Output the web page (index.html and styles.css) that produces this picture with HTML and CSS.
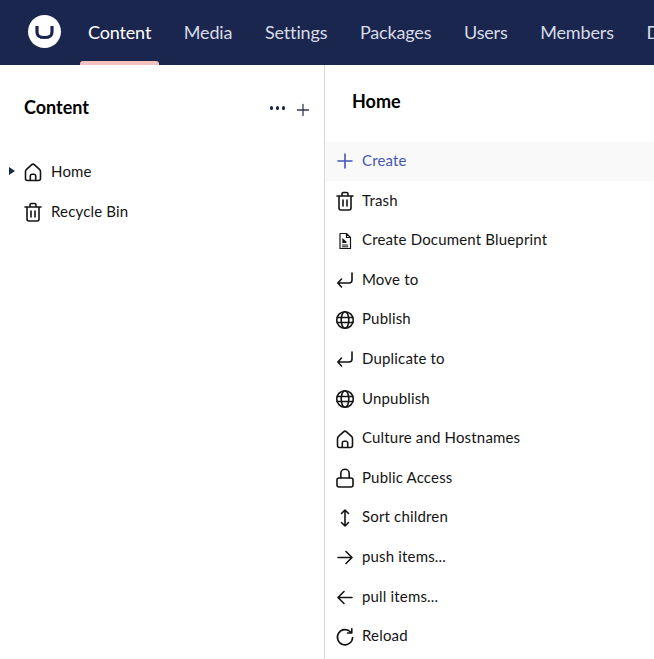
FILE: index.html
```html
<!DOCTYPE html>
<html lang="en">
<head>
    <meta charset="UTF-8">
    <meta name="viewport" content="width=device-width, initial-scale=1.0">
    <title>Content</title>
    <link rel="stylesheet" href="styles.css">
</head>
<body>
    <svg class="icon-defs" width="0" height="0">
        <symbol id="i-home" viewBox="0 0 20 20"><path d="M2.500 16.500V9.500c0-.8.300-1.500 1-2.100l5-4.600a2.200 2.200 0 0 1 3 0l5 4.600c.7.600 1 1.300 1 2.100v7a2 2 0 0 1-2 2h-11a2 2 0 0 1-2-2z M7.300 18.500v-4.500a1.700 1.700 0 0 1 1.700-1.700h2a1.700 1.700 0 0 1 1.700 1.700v4.500"/></symbol>
        <symbol id="i-trash" viewBox="0 0 20 20"><path d="M2 5h16 M7 5V3a1.500 1.500 0 0 1 1.500-1.500h3A1.500 1.500 0 0 1 13 3v2 M4 5v12a2 2 0 0 0 2 2h8a2 2 0 0 0 2-2V5 M8 9v6 M12 9v6"/></symbol>
        <symbol id="i-doc" viewBox="0 0 20 20"><path d="M5 2.500h6.500L15.500 6.500v11H5z M11.500 2.500V6.500h4" stroke-width="1.200"/><path class="solid" d="M7.300 7l4.200 3.800v1.200H7.300z"/><path d="M7.300 14h5.500 M7.300 15.800h5.500" stroke-width="1"/></symbol>
        <symbol id="i-return" viewBox="0 0 20 20"><path d="M17 3v7a3 3 0 0 1-3 3H3 M6.500 9L2.800 13l3.700 4"/></symbol>
        <symbol id="i-globe" viewBox="0 0 20 20"><circle cx="10" cy="10" r="8.300"/><ellipse cx="10" cy="10" rx="3.800" ry="8.300"/><path d="M2 7.500h16 M2 12.500h16"/></symbol>
        <symbol id="i-lock" viewBox="0 0 20 20"><rect x="2" y="10" width="16" height="9" rx="2"/><path d="M5.800 10V5.500a4.200 4.200 0 0 1 8.400 0V10"/></symbol>
        <symbol id="i-sort" viewBox="0 0 20 20"><path d="M10 2v16 M6.500 5.500L10 2l3.500 3.500 M6.500 14.500L10 18l3.500-3.500"/></symbol>
        <symbol id="i-right" viewBox="0 0 20 20"><path d="M3 10.500h14 M11 4.500l6 6-6 6"/></symbol>
        <symbol id="i-left" viewBox="0 0 20 20"><path d="M17 10.500H3 M9 4.500l-6 6 6 6"/></symbol>
        <symbol id="i-reload" viewBox="0 0 20 20"><path d="M15.800 5.300A7.600 7.600 0 1 0 17.600 10.500 M16.800 1.800v4.200h-4.300"/></symbol>
        <symbol id="i-plus" viewBox="0 0 20 20"><path d="M10 3v14 M3 10h14"/></symbol>
    </svg>

    <header class="topbar">
        <div class="logo"><svg viewBox="0 0 33 33" width="33" height="33"><circle cx="16.500" cy="16.500" r="16.500" fill="#fff"/><path d="M9 11v6c0 4 2 5.500 7.500 5.500s7.500-1.500 7.500-5.500v-6" fill="none" stroke="#1b264f" stroke-width="3.200"/></svg></div>
        <nav class="mainnav">
            <a class="navlink active" href="#"><span class="navtext">Content</span></a>
            <a class="navlink" href="#"><span class="navtext">Media</span></a>
            <a class="navlink" href="#"><span class="navtext">Settings</span></a>
            <a class="navlink" href="#"><span class="navtext">Packages</span></a>
            <a class="navlink" href="#"><span class="navtext">Users</span></a>
            <a class="navlink" href="#"><span class="navtext">Members</span></a>
            <a class="navlink" href="#"><span class="navtext">Dictionary</span></a>
        </nav>
    </header>

    <div class="workspace">
        <aside class="tree">
            <div class="tree-head">
                <h2>Content</h2>
                <div class="tree-actions">
                    <span class="dots"><i></i><i></i><i></i></span>
                    <svg class="icon tree-plus"><use href="#i-plus"/></svg>
                </div>
            </div>
            <ul class="tree-list">
                <li class="tree-item"><span class="caret"></span><svg class="icon"><use href="#i-home"/></svg><span class="label">Home</span></li>
                <li class="tree-item"><span class="caret-gap"></span><svg class="icon"><use href="#i-trash"/></svg><span class="label">Recycle Bin</span></li>
            </ul>
        </aside>

        <section class="actions">
            <h3>Home</h3>
            <ul class="action-list">
                <li class="action hover"><svg class="icon"><use href="#i-plus"/></svg><span class="label">Create</span></li>
                <li class="action"><svg class="icon"><use href="#i-trash"/></svg><span class="label">Trash</span></li>
                <li class="action"><svg class="icon"><use href="#i-doc"/></svg><span class="label">Create Document Blueprint</span></li>
                <li class="action"><svg class="icon"><use href="#i-return"/></svg><span class="label">Move to</span></li>
                <li class="action"><svg class="icon"><use href="#i-globe"/></svg><span class="label">Publish</span></li>
                <li class="action"><svg class="icon"><use href="#i-return"/></svg><span class="label">Duplicate to</span></li>
                <li class="action"><svg class="icon"><use href="#i-globe"/></svg><span class="label">Unpublish</span></li>
                <li class="action"><svg class="icon"><use href="#i-home"/></svg><span class="label">Culture and Hostnames</span></li>
                <li class="action"><svg class="icon"><use href="#i-lock"/></svg><span class="label">Public Access</span></li>
                <li class="action"><svg class="icon"><use href="#i-sort"/></svg><span class="label">Sort children</span></li>
                <li class="action"><svg class="icon"><use href="#i-right"/></svg><span class="label">push items...</span></li>
                <li class="action"><svg class="icon"><use href="#i-left"/></svg><span class="label">pull items...</span></li>
                <li class="action"><svg class="icon"><use href="#i-reload"/></svg><span class="label">Reload</span></li>
            </ul>
        </section>
    </div>
</body>
</html>
```

FILE: styles.css
```css
html, body {
    height: 100%;
}

body {
    margin: 0;
    display: flex;
    flex-direction: column;
    overflow: hidden;
    background-color: white;
    color: #141414;
    font-family: Lato, "Noto Sans", sans-serif;
    font-size: 15px;
}

ul {
    list-style-type: none;
    margin: 0;
    padding: 0;
}

.icon-defs {
    position: absolute;
}

symbol {
    fill: none;
    stroke: currentColor;
    stroke-width: 1.6;
    stroke-linecap: round;
    stroke-linejoin: round;
}

.solid {
    fill: currentColor;
    stroke: none;
}

.icon {
    width: 20px;
    height: 20px;
    flex: none;
}

.label {
    padding-bottom: 3px;
    letter-spacing: 0.17px;
}

/* top bar */
.topbar {
    height: 65px;
    flex: none;
    display: flex;
    background-color: #1b264f;
    overflow: hidden;
}

.logo {
    display: flex;
    align-items: center;
    padding-bottom: 2px;
    margin-left: 28px;
    margin-right: 10.700px;
}

.mainnav {
    display: flex;
    white-space: nowrap;
}

.navlink {
    position: relative;
    display: flex;
    align-items: center;
    padding: 0 16.300px;
    color: #d7dbe6;
    font-size: 18px;
    letter-spacing: -0.15px;
    text-decoration: none;
}

.navtext {
    padding-bottom: 2px;
}

.navlink.active {
    color: white;
}

.navlink.active::after {
    content: "";
    position: absolute;
    left: 8.300px;
    right: 8.300px;
    bottom: 0;
    height: 4px;
    border-radius: 3px 3px 0 0;
    background-color: #f5c1bc;
}

/* left tree */
.workspace {
    flex: 1;
    display: flex;
    min-height: 0;
}

.tree {
    width: 324px;
    flex: none;
    border-right: 1px solid #d8d7d9;
}

.tree-head {
    box-sizing: border-box;
    height: 87px;
    display: flex;
    align-items: center;
    justify-content: space-between;
    padding: 0 13px 3px 24px;
}

.tree-head h2 {
    margin: 0;
    color: #000;
    font-size: 18px;
    font-weight: 700;
}

.tree-actions {
    display: flex;
    align-items: center;
    gap: 10px;
}

.dots {
    display: flex;
    gap: 2.500px;
    margin-top: 2px;
}

.dots i {
    width: 3.500px;
    height: 3.500px;
    border-radius: 50%;
    background-color: #1b264f;
}

.tree-plus {
    width: 16px;
    height: 16px;
    margin-top: 6px;
    color: #303952;
}

.tree-item {
    height: 40px;
    display: flex;
    align-items: center;
    gap: 8px;
    padding-left: 9px;
}

.caret {
    width: 0;
    height: 0;
    border-top: 4px solid transparent;
    border-bottom: 4px solid transparent;
    border-left: 6px solid #1b264f;
    margin-bottom: 2px;
}

.caret-gap {
    width: 6px;
}

/* right panel */
.actions {
    flex: 1;
    min-width: 0;
}

.actions h3 {
    box-sizing: border-box;
    height: 76.700px;
    margin: 0;
    padding: 0 0 5px 27px;
    display: flex;
    align-items: center;
    color: #000;
    font-size: 18px;
    font-weight: 700;
}

.action {
    height: 39.600px;
    display: flex;
    align-items: center;
    gap: 7px;
    padding-left: 10px;
}

.action.hover {
    background-color: #f9f9f9;
    color: #4655b5;
}
```
